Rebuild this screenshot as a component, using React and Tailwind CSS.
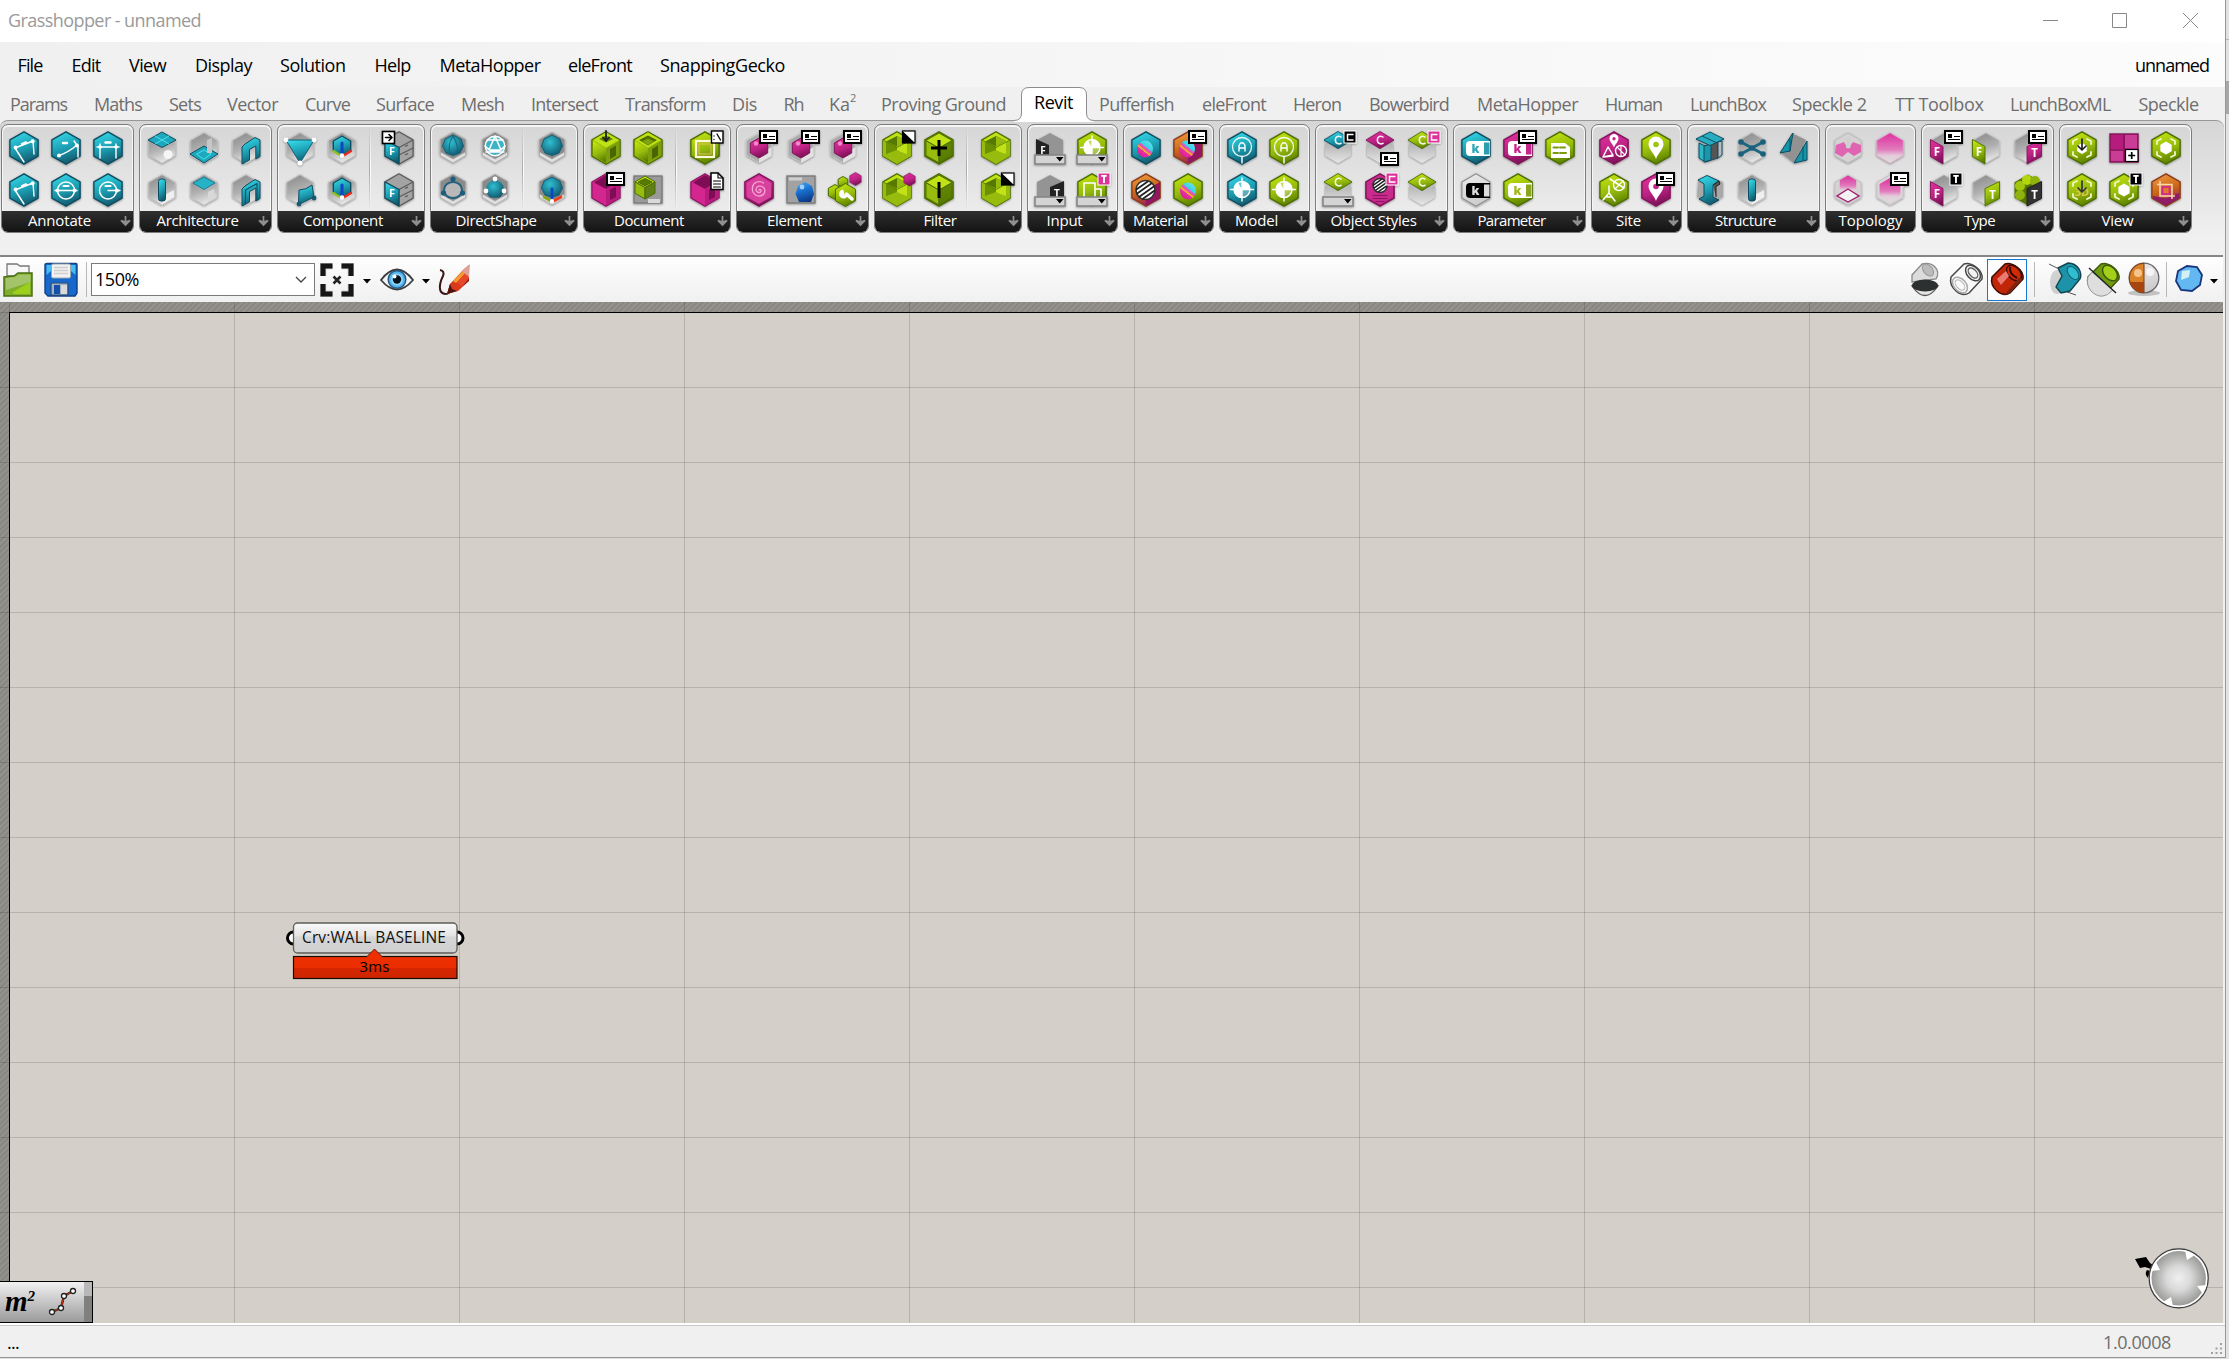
import React, { useLayoutEffect, useRef, useState } from "react";

/* ---------- text that is tracked to a given width ---------- */
function Fit({ text, w, className = "", children }) {
  const ref = useRef(null);
  const [ls, setLs] = useState(0);
  useLayoutEffect(() => {
    const natural = ref.current.getBoundingClientRect().width;
    setLs((w - natural) / text.length);
  }, [w, text]);
  return (
    <span className="inline-block shrink-0 whitespace-nowrap" style={{ width: w }}>
      <span ref={ref} className={"inline-block whitespace-nowrap " + className} style={{ letterSpacing: ls }}>
        {children || text}
      </span>
    </span>
  );
}

/* ---------- shared gradients ---------- */
const PAL = {
  teal: ["#34d6e6", "#1c9db1", "#115266", "#114c60"],
  green: ["#c0e213", "#97bc0b", "#567a00", "#4c6d00"],
  mag: ["#de2e9c", "#bf2485", "#730d51", "#80155a"],
  gray: ["#8e8e8e", "#b0b0b0", "#f0f0f0", "#a6a6a6"],
  orange: ["#ee983c", "#c96518", "#8e1b5f", "#8a3a1c"],
  light: ["#e9e9e9", "#dadada", "#c9c9c9", "#8f8f8f"],
  dark: ["#8c8c8c", "#666666", "#2c2c2c", "#777777"],
  blue: ["#3aa0f0", "#1668c4", "#0b3680", "#0d2f6a"],
};
function Defs() {
  return (
    <svg width="0" height="0" className="absolute">
      <defs>
        {Object.keys(PAL).map((k) => (
          <linearGradient key={k} id={"g-" + k} x1="0.35" y1="0" x2="0.65" y2="1">
            <stop offset="0" stopColor={PAL[k][0]} />
            <stop offset="0.5" stopColor={PAL[k][1]} />
            <stop offset="1" stopColor={PAL[k][2]} />
          </linearGradient>
        ))}
        <radialGradient id="g-ball" cx="0.4" cy="0.35" r="0.7">
          <stop offset="0" stopColor="#2fc0d2" />
          <stop offset="1" stopColor="#12566c" />
        </radialGradient>
        <linearGradient id="g-rain" x1="0.2" y1="0.9" x2="0.8" y2="0.1">
          <stop offset="0" stopColor="#d81ba0" />
          <stop offset="0.34" stopColor="#e8359a" />
          <stop offset="0.36" stopColor="#f5b13c" />
          <stop offset="0.46" stopColor="#f08a4a" />
          <stop offset="0.48" stopColor="#ee4aa8" />
          <stop offset="0.62" stopColor="#c66cc8" />
          <stop offset="0.64" stopColor="#35d3e6" />
          <stop offset="1" stopColor="#5fe0ea" />
        </linearGradient>
        <linearGradient id="g-fade" x1="0" y1="0" x2="0" y2="1">
          <stop offset="0" stopColor="#b2b2b2" />
          <stop offset="1" stopColor="#e6e6e6" />
        </linearGradient>
        <linearGradient id="g-pinkfade" x1="0" y1="0" x2="0" y2="1">
          <stop offset="0" stopColor="#e0309f" />
          <stop offset="0.55" stopColor="#e07bbd" />
          <stop offset="0.75" stopColor="#e3cbd9" />
          <stop offset="1" stopColor="#dedede" />
        </linearGradient>
        <radialGradient id="g-compass">
          <stop offset="0" stopColor="#f0f0f0" />
          <stop offset="0.45" stopColor="#d9d9d9" />
          <stop offset="1" stopColor="#9a9a98" />
        </radialGradient>
        <filter id="soft" x="-20%" y="-20%" width="140%" height="140%">
          <feDropShadow dx="0" dy="0.8" stdDeviation="1.1" floodOpacity="0.4" />
        </filter>
      </defs>
    </svg>
  );
}

/* ---------- icon primitives on a 42 × 42 cell ---------- */
const hexPts = (cx = 21, cy = 21, r = 16.2) => {
  const w = r * 0.87, h = r * 0.5;
  return `${cx},${cy - r} ${cx + w},${cy - h} ${cx + w},${cy + h} ${cx},${cy + r} ${cx - w},${cy + h} ${cx - w},${cy - h}`;
};
const Hex = ({ c, cx, cy, r, sw = 1.4 }) => (
  <polygon points={hexPts(cx, cy, r)} fill={`url(#g-${c})`} stroke={PAL[c][3]} strokeWidth={sw} strokeLinejoin="round" />
);
const GHex = () => <polygon points={hexPts(21, 21, 15.2)} fill="url(#g-gray)" stroke="#bdbdbd" strokeWidth="1" />;
const Cube = ({ c, cx = 21, cy = 21, r = 16.2, open }) => {
  const w = r * 0.87, h = r * 0.5, p = PAL[c];
  return (
    <g stroke={p[3]} strokeWidth="1" strokeLinejoin="round">
      <polygon points={`${cx - w},${cy - h} ${cx},${cy} ${cx},${cy + r} ${cx - w},${cy + h}`} fill={p[1]} />
      <polygon points={`${cx + w},${cy - h} ${cx},${cy} ${cx},${cy + r} ${cx + w},${cy + h}`} fill={p[2]} fillOpacity="0.85" />
      <polygon points={`${cx},${cy - r} ${cx + w},${cy - h} ${cx},${cy} ${cx - w},${cy - h}`} fill={p[0]} />
      {open && <polygon points={`${cx},${cy - r * 0.78} ${cx + w * 0.7},${cy - h * 0.95} ${cx},${cy - r * 0.14} ${cx - w * 0.7},${cy - h * 0.95}`} fill={p[2]} />}
    </g>
  );
};
/* cube with a doorway cut out of its right face */
const Block = ({ c, open }) => (
  <g>
    <polygon points={hexPts()} fill={PAL[c][1]} stroke={PAL[c][3]} strokeWidth="1.3" strokeLinejoin="round" />
    <polygon points="21,5.5 34,13 21,20.5 8,13" fill={PAL[c][0]} />
    <polygon points="8,14 21,21.5 21,36 8,28.5" fill="url(#g-green)" />
    <polygon points="34,14 21,21.5 21,36 34,28.5" fill="#7d9f08" />
    {open && <polygon points="21,8.5 30,13 21,18.5 12,13" fill="#4f7000" />}
    {open && <polygon points="21,11.5 27,14.5 21,18 15,14.5" fill="#7fa108" />}
    <polygon points="25,22 31,18.5 31,28.5 25,32" fill="#486600" />
  </g>
);
/* box seen from above with a hollow centre */
const Hollow = ({ c }) => {
  const p = PAL[c];
  return (
    <g>
      <polygon points={hexPts()} fill={p[0]} stroke={p[3]} strokeWidth="1.3" />
      <polygon points="7,13 21,20 21,37 7,29" fill={p[1]} />
      <polygon points="35,13 21,20 21,37 35,29" fill={p[1]} />
      <polygon points="10,14.5 21,9 31,14 21,19.5" fill={p[2]} />
      <polygon points="10,15 21,20 21,31 10,27" fill="#6d9000" />
      <polygon points="21,20 31,15 31,27 21,24" fill={p[0]} />
      <polygon points="10,27 21,23 30,27.500 21,33" fill={p[1]} />
      <polygon points="21,9 31,14 21,19.5" fill={p[1]} />
      <path d="M7 13L21 20.500 35 13" stroke="#4c6d00" strokeWidth="0.700" fill="none" />
    </g>
  );
};
const MagOpen = () => (
  <g strokeLinejoin="round">
    <polygon points={hexPts()} fill="#d4268f" stroke="#8a1760" strokeWidth="1.2" />
    <polygon points="21,6 33,12.5 21,20 9,13.5" fill="#7f0d54" />
    <polygon points="21,21 34,13.5 34,29 21,36" fill="#b51c7c" />
    <polygon points="25,21 31,18 31,28 25,31" fill="#7f0d54" />
  </g>
);
const L = ({ d, c = "#fff", w = 1.4, f = "none" }) => (
  <path d={d} stroke={c} strokeWidth={w} fill={f} strokeLinecap="round" strokeLinejoin="round" />
);
const Tx = ({ x, y, s = 11, c = "#fff", children, w = 700 }) => (
  <text x={x} y={y} fontSize={s} fill={c} fontWeight={w} textAnchor="middle" fontFamily="Open Sans, sans-serif">{children}</text>
);
const Dot = ({ x, y, r = 2, c = "#fff" }) => <circle cx={x} cy={y} r={r} fill={c} />;
const Card = ({ x = 22, y = 4 }) => (
  <g shapeRendering="crispEdges">
    <rect x={x} y={y} width="17" height="12" fill="#fff" stroke="#000" strokeWidth="1.6" />
    <path d={`M${x + 3} ${y + 4}h4M${x + 3} ${y + 5.5}h4`} stroke="#000" strokeWidth="2" />
    <path d={`M${x + 8.5} ${y + 5.5}h6M${x + 3} ${y + 8.8}h11.5`} stroke="#000" strokeWidth="1.2" />
  </g>
);
const Badge = ({ x = 27, y = 4, bg = "#000", fg = "#fff", bd = "#fff", ch }) => (
  <g>
    <rect x={x} y={y} width="12" height="12" fill={bg} stroke={bd} strokeWidth="1" />
    <Tx x={x + 6} y={y + 9.8} s={10} c={fg} w={800}>{ch}</Tx>
  </g>
);
/* open "C" bracket badge */
const CBadge = ({ x = 27, y = 4, bg = "#000" }) => (
  <g>
    <rect x={x} y={y} width="12" height="12" fill={bg} stroke="#fff" strokeWidth="1" />
    <path d={`M${x + 9.5} ${y + 3.5}h-6v5.5h6`} stroke="#fff" strokeWidth="1.5" fill="none" />
  </g>
);
const BW = () => (
  <g>
    <rect x="26.5" y="4" width="12.5" height="12" fill="#fff" stroke="#000" strokeWidth="1.2" />
    <path d="M26.5 4V16H39Z" fill="#000" />
  </g>
);
const Drop = () => (
  <g>
    <rect x="6" y="28" width="30" height="9" fill="#d4d4d4" stroke="#858585" strokeWidth="1.6" />
    <path d="M27 30h7.5l-3.7 4.5Z" fill="#000" />
  </g>
);
const Dim = () => (
  <g>
    <L d="M12 21L30 14M12 21L21 35M30 14L31 27" />
    <L d="M19 17l4-1.6" w={2.4} />
    <Dot x={12.6} y={20.6} /><Dot x={29.6} y={14.2} />
  </g>
);
const Door = () => <path d="M17 37V20L20 17 30 10.5 35 13V29.5L30.8 32V19L24.5 22.5V33Z" fill="url(#g-teal)" stroke="#114c60" strokeWidth="1" strokeLinejoin="round" />;
const Axis = () => (
  <g>
    <GHex />
    <Hex c="teal" cy={19} r={10} />
    <L d="M21 16V26" c="#0b45c8" w={3} />
    <L d="M12.5 24l6.5 4" c="#8fc21a" w={2.4} />
    <L d="M23.5 28l6.5-4" c="#ee2a1c" w={2.4} />
    <Dot x={21} y={28.5} r={2.2} />
  </g>
);
const Shell = ({ children }) => (
  <g>
    <polygon points={hexPts(21, 20, 14.8)} fill="#8a8a8a" stroke="#b2b2b2" strokeWidth="1" />
    <path d="M8.5 25L21 32 33.5 25V28.5L21 35.8 8.5 28.5Z" fill="#e0e0e0" stroke="#a5a5a5" strokeWidth="0.6" />
    {children}
  </g>
);
const Blob = () => <path d="M21 8L29 12 31.5 19 28 26 21 28.5 14 26 10.5 19 13 12Z" fill="url(#g-ball)" stroke="#155e76" strokeWidth="1" />;
const FCube = () => (
  <g strokeLinejoin="round">
    <polygon points={hexPts()} fill="#a3a3a3" stroke="#5c5c5c" strokeWidth="1.3" />
    <path d="M7 13L21 20.5 35 13M21 20.5V37M21 28L35 21M27 19.5l3-1.5M27 28l3-1.5" stroke="#5c5c5c" strokeWidth="1.3" fill="none" />
    <polygon points="7,13 21,20.5 21,37 7,29" fill="url(#g-teal)" stroke="#114c60" strokeWidth="1.2" />
    <Tx x={14} y={28} s={11}>F</Tx>
  </g>
);
const Elem = () => (
  <g>
    <polygon points={hexPts(21, 21, 14.5)} fill="#aaaaaa" stroke="#c2c2c2" />
    <path d="M21 36L33.5 29V20L21 28Z" fill="#e2e2e2" />
    <Hex c="mag" cx={21} cy={21} r={10} sw={1} />
    <Dot x={18} y={16.5} r={2.2} c="#f08cc8" />
  </g>
);
const Cross = () => (
  <g>
    <circle cx="21" cy="20.5" r="8" fill="none" stroke="#fff" strokeWidth="1.4" />
    <path d="M21 20.5V12.5A8 8 0 0 0 13 20.5ZM21 20.5V28.5A8 8 0 0 0 29 20.5Z" fill="#fff" fillOpacity="0.3" />
    <path d="M21 20.5V12.5A8 8 0 0 1 29 20.5ZM21 20.5V28.5A8 8 0 0 1 13 20.5Z" fill="#fff" />
    <path d="M21 20.5H13A8 8 0 0 1 17 13.600Z" fill="#fff" />
    <L d="M21 9V32M9.5 20.5H32.5" w={1.4} />
  </g>
);
const ACirc = () => (
  <g>
    <circle cx="21" cy="20" r="9.5" fill="none" stroke="#fff" strokeOpacity="0.9" strokeWidth="1.3" />
    <L d="M18 24V18.5L19.5 16H22.5L24 18.5V24M18 21H24M21 30V36" w={1.4} />
  </g>
);
const Rain = ({ x = 20, y = 22 }) => <ellipse cx={x} cy={y} rx="8" ry="8.5" fill="url(#g-rain)" />;
const CTop = ({ c, fade = true }) => (
  <g>
    {fade && <path d="M8 16L21 23 34 16V28.5L21 36 8 28.5Z" fill="url(#g-fade)" />}
    <polygon points="21,4.5 35,13 21,21.5 7,13" fill={`url(#g-${c})`} stroke={PAL[c][3]} strokeWidth="0.9" />
    <path d="M24.5 10.5C22 8 18.3 9.5 18.3 13S22 18 24.5 15.8" stroke="#fff" strokeOpacity="0.9" strokeWidth="1.6" fill="none" />
  </g>
);
const KTag = ({ fg, bg = "#fff", bar }) => (
  <g>
    <path d="M35 14H15Q11 14 11 18V25Q11 29 15 29H35Z" fill={bg} />
    <rect x="29" y="15.5" width="5.5" height="12" fill={bar} />
    <Tx x={20.5} y={26} s={12} c={fg} w={800}>k</Tx>
  </g>
);
const Pin = ({ x = 21, y = 17, s = 1, hole }) => (
  <g transform={`translate(${x} ${y}) scale(${s})`}>
    <path d="M0 14C-2 8-7.5 4.5-7.5-1A7.5 7.5 0 0 1 7.5-1C7.5 4.5 2 8 0 14Z" fill="#fff" />
    <circle cx="0" cy="-0.5" r="2.8" fill={hole} />
  </g>
);
const Face = ({ side, c, ch }) => (
  <g>
    <polygon points={hexPts(21, 21, 15)} fill="url(#g-gray)" stroke="#bebebe" strokeWidth="0.8" />
    {side === "l" ? (
      <g><polygon points="7.5,12.5 20,19.5 20,37 7.5,29.5" fill={`url(#g-${c})`} stroke={PAL[c][3]} strokeWidth="0.9" /><Tx x={13.8} y={29} s={11.5}>{ch}</Tx></g>
    ) : (
      <g><polygon points="34.5,12.5 20,19.5 20,37 34.5,29.5" fill={`url(#g-${c})`} stroke={PAL[c][3]} strokeWidth="0.9" /><Tx x={27.5} y={30} s={11.5}>{ch}</Tx></g>
    )}
  </g>
);
const Focus = ({ c = "#f4f4c8" }) => <L c={c} w={1.8} d="M12 17V14L16 12M26 12L30 14V17M30 25V28L26 30M16 30L12 28V25" />;
const Hatch = ({ x = 21, y = 21, r = 8.5, w = 1.8 }) => (
  <g>
    <circle cx={x} cy={y} r={r} fill="#fff" stroke="#333" strokeWidth="1.6" />
    <g transform={`rotate(-35 ${x} ${y})`}>
      {[-0.6, -0.2, 0.2, 0.6].map((k) => (
        <path key={k} d={`M${x - r * Math.sqrt(1 - k * k)} ${y + k * r}H${x + r * Math.sqrt(1 - k * k)}`} stroke="#222" strokeWidth={w} />
      ))}
    </g>
  </g>
);
const Steel = () => (
  <g stroke="#114c60" strokeWidth="1" strokeLinejoin="round">
    <path d="M10 16L16 19V35L10 31Z" fill="#2ab7c9" />
    <path d="M16 19L29 15V31L16 35Z" fill="#555" />
    <path d="M15 19L22 17V33L15 35Z" fill="#1c94a9" />
    <path d="M7 12L21 5 35 12 21 18.5Z" fill="#26aec0" />
    <path d="M13 9L27 15.5" fill="none" />
    <path d="M29 15V31L33 28V14Z" fill="#bbb" />
  </g>
);

const I = {
  dim: <><Hex c="teal" /><Dim /></>,
  dim2: <><Hex c="teal" /><L d="M13 29Q24 25 32 18M33 19V30M29 14L32 18" /><L d="M18 16h4" w={2.4} /><Dot x={14} y={28.5} /><Dot x={32} y={18.5} /></>,
  dim3: <><Hex c="teal" /><L d="M10 20H32M13 17V31M29 17V31" /><L d="M18.5 15.5h5" w={2.4} /><Dot x={13} y={20} r={1.8} /><Dot x={29} y={20} r={1.8} /></>,
  dia: <><Hex c="teal" /><circle cx="21" cy="21.5" r="8.5" fill="none" stroke="#fff" strokeWidth="1.5" /><L d="M10 21.5H32" /><L d="M18.5 17h5" w={2.2} /><Dot x={12.5} y={21.5} /><Dot x={29.5} y={21.5} /></>,
  rad: <><Hex c="teal" /><circle cx="21" cy="21.5" r="8.5" fill="none" stroke="#fff" strokeWidth="1.5" /><L d="M21 21.5H33" /><L d="M18.5 17h5" w={2.2} /><Dot x={30} y={21.5} /></>,
  ceil: <><GHex /><polygon points="21,5 35,13 21,20.5 7,13" fill="#1fa9bd" stroke="#114c60" /><L d="M14 9L28 17M28 9L14 17" c="#4be0ee" w={1} /><Dot x={27} y={27.5} r={4.5} c="#f6f6f6" /></>,
  floor: <><GHex /><polygon points="7,27 21,19 35,27 21,36" fill="#1fa9bd" stroke="#114c60" /><L d="M14 27L21 23 28 27 21 32Z" c="#4be0ee" w={1} /><path d="M24 13l5-2v15h-5Z" fill="#c6c6c6" /></>,
  door: <><GHex /><Door /></>,
  col: <><GHex /><polygon points="22,27 33,21 33,28 21,35.5" fill="#f0f0f0" /><rect x="17.5" y="10" width="7" height="22" rx="2.5" fill="url(#g-teal)" stroke="#114c60" /></>,
  roof: <><GHex /><polygon points="21,8 32,14 21,20.5 10,14" fill="#25b3c7" stroke="#178096" /><path d="M25 23l6-3v10l-6 3Z" fill="#d8d8d8" /></>,
  door2: <><GHex /><Door /><L d="M20.5 35V21L32 14.5V31" c="#0f5468" w={1.2} /></>,
  tri: <><GHex /><path d="M7 13H35L21 36Z" fill="url(#g-teal)" stroke="#155e76" /><Dot x={7} y={13} r={2.4} /><Dot x={35} y={13} r={2.4} /><Dot x={21} y={36} r={2.4} /></>,
  axis: <Axis />,
  panel: <><GHex /><path d="M20 21Q27 21 33 16L35 28 21 35 19.500 34Z" fill="url(#g-teal)" stroke="#114c60" /><Dot x={35} y={29} r={2.4} c="#145b70" /><Dot x={20} y={35} r={2.4} c="#145b70" /></>,
  fIn: <><FCube /><rect x="4.5" y="4.5" width="12" height="12" fill="#fff" stroke="#000" strokeWidth="1.6" /><L d="M7.5 10.5H13.5M11 7.5L14 10.5 11 13.5" c="#000" w={1.6} /></>,
  f: <FCube />,
  ds1: <Shell><Blob /><L d="M21 9Q15 18 18 27M21 9Q27 18 25 27" c="#126078" w={0.9} /></Shell>,
  ds2: <Shell><circle cx="21" cy="19" r="10" fill="#3cb4c6" /><L d="M21 9L27 23H15ZM11 19Q21 30 31 19M13 13H29M12 25H30" w={1.6} /><circle cx="21" cy="19" r="9.7" fill="none" stroke="#fff" strokeWidth="1.4" /></Shell>,
  ds3: <Shell><Blob /></Shell>,
  ds4: <Shell><ellipse cx="21" cy="21" rx="9" ry="8" fill="#b8b8b8" stroke="#22617e" strokeWidth="2" /><Dot x={21} y={10} r={2.6} c="#1c5b7c" /><Dot x={11.5} y={24} r={2.6} c="#1c5b7c" /><Dot x={30.5} y={24} r={2.6} c="#1c5b7c" /></Shell>,
  ds5: <Shell><path d="M21 9L30 22 26 28H16L12 22Z" fill="url(#g-ball)" stroke="#155e76" /><circle cx="21" cy="20" r="8.8" fill="url(#g-ball)" /><Dot x={21} y={10} r={2.4} /><Dot x={12} y={22} r={2.4} /><Dot x={30} y={22} r={2.4} /></Shell>,
  ds6: <Shell><Blob /><L d="M21 20V29" c="#0b45c8" w={2.8} /><L d="M13 28l6 3.5" c="#86a81a" w={2.8} /><L d="M23.5 31.5L30 28" c="#ee3a1c" w={2.8} /><Dot x={21} y={32} /></Shell>,
  doc1: <><Block c="green" /><polygon points="14,12 21,8.5 28,12 21,15.5" fill="#5f8500" /><L d="M21 4V14M18 10.5L21 14 24 10.5" c="#222" w={1.8} /></>,
  doc2: <Block c="green" open />,
  doc3: <><Hex c="green" /><rect x="12" y="14" width="18" height="16" fill="none" stroke="#fff8d8" strokeWidth="2.2" /><rect x="15" y="17" width="12" height="10" fill="none" stroke="#e6c060" strokeWidth="1" /><rect x="27.5" y="4" width="11.5" height="12" fill="#fff" stroke="#000" strokeWidth="1.4" /><L d="M30 9v0M30 12.500v0M33 7L36.500 13" c="#000" w={1.3} /></>,
  doc4: <><MagOpen /><Card x={22} /></>,
  doc5: <><rect x="7" y="7" width="28" height="27" fill="#9a9a9a" stroke="#777" strokeWidth="1.3" /><rect x="21" y="30" width="12" height="4" fill="#d9d9d9" /><Cube c="green" cx={18} cy={18.5} r={11.5} open /></>,
  doc6: <><MagOpen /><path d="M27 4h7l5 5v11.5h-12Z" fill="#fff" stroke="#000" strokeWidth="1.5" /><L d="M34 4v5h5M29.5 12h7M29.5 15h7M29.5 18h7" c="#000" w={1.1} /></>,
  el: <><Elem /><Card x={22} /></>,
  swirl: <><Hex c="mag" /><polygon points={hexPts(21, 21, 14)} fill="#d6429c" /><L d="M21 21c1.500-1.500 3 .5 1.500 2s-5 0-4.500-3 5-4 7.500-1.500 1.500 8-3.500 8.500-8.500-4-7.500-9 7-7 11-4" c="#f4a6d4" w={1.3} /></>,
  blue: <><rect x="7" y="7" width="28" height="27" fill="#a2a2a2" stroke="#777" strokeWidth="1.3" /><rect x="9" y="8.5" width="13" height="3" fill="#d0d0d0" /><path d="M25 13L32 17 34 25 31 33H19L15.5 25 18 17Z" fill="url(#g-blue)" /><Dot x={22} y={18} r={2.4} c="#9fd0ff" /></>,
  tool: <><Hex c="green" cx={13} cy={23} r={7.5} sw={1} /><Hex c="green" cx={21} cy={13} r={5.5} sw={1} /><Hex c="green" cx={23.5} cy={26} r={11.5} sw={1} /><L d="M24.500 25L30 30" w={3.500} /><path d="M21 20.500a4.500 4.500 0 1 0 5 5.500l-3.500-.5-.5-2.500Z" fill="#fff" /><Hex c="mag" cx={33.5} cy={10} r={6.5} sw={0.6} /></>,
  fi1: <><Hollow c="green" /><BW /></>,
  fi2: <><Hex c="green" /><Cube c="green" r={15} /><path d="M21 13V29M13 21H29" stroke="#000" strokeWidth="3" /></>,
  fi3: <Hollow c="green" />,
  fi4: <><Hollow c="green" /><Hex c="mag" cx={33.5} cy={10.5} r={6.5} sw={0.6} /></>,
  fi5: <><Hex c="green" /><Cube c="green" r={15} /><path d="M21 13V29" stroke="#000" strokeWidth="3" /></>,
  in1: <><path d="M21 6L34 13V29H8V13Z" fill="#949494" /><path d="M7 12L20 18V29H7Z" fill="#222" /><Tx x={14} y={27} s={10}>F</Tx><Drop /></>,
  in2: <><Hex c="green" /><Cross /><Drop /></>,
  in3: <><path d="M21 6L34 13V29H8V13Z" fill="#949494" /><path d="M35 12L21 18V29H35Z" fill="#222" /><Tx x={28} y={28} s={10}>T</Tx><Drop /></>,
  in4: <><Hex c="green" /><L d="M13 29V14H24V29M24 20H30V29" w={1.6} /><Badge bg="#dc3399" ch="T" /><Drop /></>,
  ma1: <><Hex c="teal" /><Rain /></>,
  ma2: <><Hex c="orange" /><polygon points="35,13 21,21 21,37 35,29" fill="#951361" /><Rain /><Card x={22} /></>,
  ma3: <><Hex c="orange" /><polygon points="35,13 21,21 21,37 35,29" fill="#951361" /><Hatch x={20.5} r={9.5} /></>,
  ma4: <><Hex c="green" /><Rain x={21} /></>,
  mo1: <><Hex c="teal" /><ACirc /></>,
  mo2: <><Hex c="green" /><ACirc /></>,
  mo3: <><Hex c="teal" /><Cross /></>,
  mo4: <><Hex c="green" /><Cross /></>,
  os1: <><CTop c="teal" /><CBadge /></>,
  os2: <><CTop c="mag" /><Card x={22} y={26} /></>,
  os3: <><CTop c="green" /><CBadge bg="#dc3399" /></>,
  os4: <><CTop c="green" /><Drop /></>,
  os5: <><Hex c="mag" /><polygon points={hexPts(21, 21, 15)} fill="#c92a8c" /><Hatch y={16.5} r={7} w={1.5} /><L d="M14 26.5H28M14 29.5H28M17 32.5H25" c="#8a1760" w={1.2} /><CBadge bg="#dc3399" /></>,
  os6: <CTop c="green" />,
  pa1: <><Hex c="teal" /><KTag fg="#2fa8bb" bar="#2b9fb2" /></>,
  pa2: <><Hex c="mag" /><KTag fg="#c9278b" bar="#c9278b" /><Card x={22} /></>,
  pa3: <><Hex c="green" /><path d="M12 16H26L31 20V31H12Z" fill="#fff" /><L d="M14.500 20.500H19M21 20.500H26M14.500 26H19M21 26H27" c="#7a9c10" w={2} /></>,
  pa4: <><Hex c="light" sw={1.2} /><KTag fg="#ddd" bg="#000" bar="#ddd" /></>,
  pa5: <><Hex c="green" /><KTag fg="#a4b81a" bar="#8aa51a" /></>,
  si1: <><Hex c="mag" /><Pin y={12} s={0.6} hole="#c8258b" /><L d="M10 30L15 20 20 28ZM10 30L20 29" w={1.4} /><circle cx="28" cy="24" r="5.5" fill="none" stroke="#fff" strokeWidth="1.4" /><L d="M24 20l8 8M28 18.5V29" w={1.1} /></>,
  si2: <><Hex c="green" /><Pin y={18} hole="#9fc40c" /></>,
  si3: <><Hex c="green" /><L d="M16 17V24L10 31M16 24L22 32M14 28H19M17 10L31 19" w={1.5} /><circle cx="26" cy="16" r="5.5" fill="none" stroke="#fff" strokeWidth="1.4" /><L d="M22 20L30 12" w={1.2} /></>,
  si4: <><Hex c="mag" /><Pin y={18} hole="#c8258b" /><Card x={22} /></>,
  st1: <Steel />,
  st2: <><GHex /><L d="M10 15L32 27M32 15L10 27" c="#1b6680" w={3} />{[[10, 15], [32, 15], [10, 27], [32, 27], [21, 21]].map(([a, b]) => <Dot key={a + "-" + b} x={a} y={b} r={2.8} c="#1b5f7c" />)}</>,
  st3: <><path d="M19 6L33 13 21 36 8 26Z" fill="#929292" /><path d="M20 6L7 26 17 24Z" fill="#1593a8" stroke="#114c60" /><path d="M34 14L21 36 34 33Z" fill="#1593a8" stroke="#114c60" /><L d="M17 12V24M30 20V33" c="#0f5468" w={1} /></>,
  st4: <><path d="M9 12L20 7 34 13V28L21 35 8 28Z" fill="#a8a8a8" /><path d="M9 11L18 6.500 30 12 24 16V28L30 31 21 36 10 30 15 27V15Z" fill="url(#g-teal)" stroke="#114c60" /><path d="M24 16L30 12 31 15 27 17.500V28" fill="#555" stroke="#222" /></>,
  to1: <><polygon points={hexPts(21, 21, 15)} fill="#d6d2d4" stroke="#bcbcbc" /><path d="M9 18L17 15 21 22 26 15 34 18V25L27 29 21 25 15 30 8 26Z" fill="#e052ac" fillOpacity="0.85" /><rect x="19" y="11" width="4.5" height="10" fill="#cfcfcf" /></>,
  to2: <polygon points={hexPts(21, 21, 15.2)} fill="url(#g-pinkfade)" stroke="#dba9c8" strokeWidth="0.8" />,
  to3: <><polygon points={hexPts(21, 21, 15)} fill="#d6d2d4" stroke="#c0c0c0" /><polygon points={hexPts(21, 16, 9.5)} fill="url(#g-pinkfade)" /><path d="M21 20L32 27 21 33 10 27Z" fill="#fff" fillOpacity="0.7" stroke="#a01c6c" strokeWidth="1.4" /></>,
  to4: <><polygon points={hexPts(21, 21, 15)} fill="#dcd6d9" stroke="#c4c4c4" /><polygon points={hexPts(21, 21, 12)} fill="url(#g-pinkfade)" /><Card x={22} /></>,
  ty1: <><Face side="l" c="mag" ch="F" /><Card x={22} /></>,
  ty2: <Face side="l" c="green" ch="F" />,
  ty3: <><Face side="r" c="mag" ch="T" /><Card x={22} /></>,
  ty4: <><Face side="l" c="mag" ch="F" /><Badge ch="T" /></>,
  ty5: <Face side="r" c="green" ch="T" />,
  ty6: <><polygon points={hexPts(21, 21, 15.500)} fill="#537500" /><Dot x={13} y={17} r={5} c="#a2c60e" /><Dot x={20} y={11} r={5} c="#b3d610" /><Dot x={28} y={12} r={5} c="#8fb20a" /><Dot x={13} y={26} r={5} c="#8fb20a" /><polygon points="34.5,12.5 20,19.5 20,37 34.5,29.5" fill="#333" stroke="#222" /><Tx x={27.5} y={30} s={11.5}>T</Tx></>,
  vi1: <><Hex c="green" /><Focus /><polygon points={hexPts(21, 21.5, 5.5)} fill="#fff" /><L d="M21 12V22M17 19L21 23 25 19" c="#222" w={1.7} /></>,
  vi2: <><rect x="7" y="7" width="28" height="28" fill="#b51f7e" stroke="#84175a" strokeWidth="1.4" /><path d="M8 22h13v12H8ZM22 8h12v13H22Z" fill="#d14a9f" fillOpacity="0.75" /><path d="M21 7V22M7 23H35M21 24V35" stroke="#7d1054" strokeWidth="1.5" /><rect x="22.5" y="22.5" width="12.5" height="12" fill="#fff" stroke="#000" strokeWidth="1.2" /><path d="M28.7 25V32M25.2 28.5H32.2" stroke="#000" strokeWidth="1.7" /></>,
  vi3: <><Hex c="green" /><Focus /><polygon points={hexPts(21, 21, 6.5)} fill="#fff" /></>,
  vi4: <><Hex c="green" /><Focus /><Tx x={21} y={27} s={11} c="#d9c84a">3D</Tx><L d="M21 12V22M17 19L21 23 25 19" c="#333" w={1.7} /></>,
  vi5: <><Hex c="green" /><Focus /><polygon points={hexPts(21, 21, 6.5)} fill="#fff" /><Badge ch="T" /></>,
  vi6: <><Hex c="orange" /><polygon points="8,27 21,29.500 34,24 34,29 21,36.500 8,29.500" fill="#8f1a66" /><path d="M15 12V27H30M12 15.5H27V30" stroke="#fbd9b4" strokeWidth="1.5" fill="none" /><rect x="17.5" y="18" width="7" height="7" fill="#e07a2a" stroke="#d32a8e" strokeWidth="1.8" /></>,
};
function Icon({ n }) {
  return (
    <svg viewBox="0 0 42 42" className="size-[42px] shrink-0 overflow-visible">
      {n && <g filter="url(#soft)">{I[n]}</g>}
    </svg>
  );
}

/* ---------- ribbon ---------- */
const GROUPS = [
  { t: "Annotate", w: 63, rows: [["dim", "dim2", "dim3"], ["dim", "dia", "rad"]] },
  { t: "Architecture", w: 82, rows: [["ceil", "floor", "door"], ["col", "roof", "door2"]] },
  { t: "Component", w: 80, rows: [["tri", "axis", "|", "fIn"], ["panel", "axis", "|", "f"]] },
  { t: "DirectShape", w: 81, rows: [["ds1", "ds2", "|", "ds3"], ["ds4", "ds5", "|", "ds6"]] },
  { t: "Document", w: 70, rows: [["doc1", "doc2", "|", "doc3"], ["doc4", "doc5", "|", "doc6"]] },
  { t: "Element", w: 55, rows: [["el", "el", "el"], ["swirl", "blue", "tool"]] },
  { t: "Filter", w: 33, rows: [["fi1", "fi2", "|", "fi3"], ["fi4", "fi5", "|", "fi1"]] },
  { t: "Input", w: 36, rows: [["in1", "in2"], ["in3", "in4"]] },
  { t: "Material", w: 55, rows: [["ma1", "ma2"], ["ma3", "ma4"]] },
  { t: "Model", w: 43, rows: [["mo1", "mo2"], ["mo3", "mo4"]] },
  { t: "Object Styles", w: 86, rows: [["os1", "os2", "os3"], ["os4", "os5", "os6"]] },
  { t: "Parameter", w: 68, rows: [["pa1", "pa2", "pa3"], ["pa4", "pa5", ""]] },
  { t: "Site", w: 25, rows: [["si1", "si2"], ["si3", "si4"]] },
  { t: "Structure", w: 61, rows: [["st1", "st2", "st3"], ["st4", "col", ""]] },
  { t: "Topology", w: 64, noArrow: true, rows: [["to1", "to2"], ["to3", "to4"]] },
  { t: "Type", w: 31, rows: [["ty1", "ty2", "ty3"], ["ty4", "ty5", "ty6"]] },
  { t: "View", w: 32, rows: [["vi1", "vi2", "vi3"], ["vi4", "vi5", "vi6"]] },
];
function Group({ g }) {
  return (
    <div className="flex h-[109px] shrink-0 flex-col overflow-hidden rounded-[7px] border border-[#7d7d7d] bg-gradient-to-b from-[#d6d6d6] to-[#f1f1f1] shadow-[inset_0_1px_0_1px_#f6f6f6]">
      <div className="flex h-[87px] pt-[2px] pr-[4.5px] pl-[0.5px]">
        {g.rows[0].map((n, i) =>
          n === "|" ? (
            <div key={i} className="flex h-[84px] w-[15px] justify-center">
              <div className="w-px bg-gradient-to-b from-transparent via-[#a9a9a9] to-transparent" />
              <div className="w-px bg-gradient-to-b from-transparent via-white to-transparent" />
            </div>
          ) : (
            <div key={i} className="flex flex-col">
              <Icon n={n} />
              <Icon n={g.rows[1][i]} />
            </div>
          )
        )}
      </div>
      <div className="flex h-[21px] items-center bg-gradient-to-b from-[#2f2f2f] to-[#141414]">
        <div className="flex h-[21px] flex-1 justify-center leading-[19px]">
          <Fit text={g.t} w={g.w} className="text-[15px] text-white" />
        </div>
        {!g.noArrow && (
          <svg viewBox="0 0 16 21" className="h-[21px] w-[16px] shrink-0">
            <path d="M8.500 5V14M4 9.500L8.500 14 13 9.500L8.500 11Z" stroke="#8f8f8f" strokeWidth="1.700" fill="#8f8f8f" />
          </svg>
        )}
      </div>
    </div>
  );
}

/* [label, start, end] */
const MENU = [
  ["File", 17.5, 42.5], ["Edit", 71.5, 100.5], ["View", 129, 166], ["Display", 195, 252], ["Solution", 280, 345.5],
  ["Help", 374.5, 410.5], ["MetaHopper", 439.5, 540.5], ["eleFront", 568, 632], ["SnappingGecko", 660, 785],
];
const TABS = [
  ["Params", 10, 67], ["Maths", 94, 142], ["Sets", 169, 201], ["Vector", 227, 278], ["Curve", 305, 350], ["Surface", 376, 434],
  ["Mesh", 461, 504], ["Intersect", 531, 598], ["Transform", 625, 705.5], ["Dis", 732, 757], ["Rh", 783.5, 803.5], ["Ka2", 829, 854.5],
  ["Proving Ground", 881, 1006], ["Revit", 1034, 1073], ["Pufferfish", 1099, 1174], ["eleFront", 1202, 1266], ["Heron", 1293, 1341],
  ["Bowerbird", 1369, 1449], ["MetaHopper", 1477, 1578], ["Human", 1605, 1662], ["LunchBox", 1690, 1766], ["Speckle 2", 1792, 1866.5],
  ["TT Toolbox", 1895, 1983.5], ["LunchBoxML", 2010, 2110.5], ["Speckle", 2138.5, 2198.5],
];
function Strip({ items, className, render }) {
  return items.map(([t, s, e], i) => (
    <div key={i} className={"relative shrink-0 " + className} style={{ marginLeft: s - (i ? items[i - 1][2] : 0), width: e - s }}>
      {render(t, e - s)}
    </div>
  ));
}

/* ---------- toolbar icons ---------- */
const OpenIcon = () => (
  <svg viewBox="0 0 30 36" className="h-[36px] w-[30px]">
    <path d="M4 14V2H14L17 4H26V14Z" fill="#f7f7f7" stroke="#777" strokeWidth="1.3" />
    <path d="M1 34V15L11 14 15 11H29V34Z" fill="#7fae2a" stroke="#4a7013" strokeWidth="1.5" />
    <path d="M2.5 16L12 15 16 12.5H27.5V20L3 28Z" fill="#a3c46a" />
    <path d="M10 30L27 20V32H10Z" fill="#9bcf1c" />
  </svg>
);
const SaveIcon = () => (
  <svg viewBox="0 0 34 36" className="h-[36px] w-[34px]">
    <path d="M1 3Q1 1.5 3 1.5H32Q33 1.5 33 3V31L31 34H4L1 31Z" fill="#1668cc" stroke="#123f86" strokeWidth="1.4" />
    <path d="M2.5 3H7V9L2.5 13ZM27 3H31.5V13L27 9Z" fill="#45bdf0" />
    <rect x="7.5" y="2" width="19" height="14" rx="1.5" fill="#f1f1f1" stroke="#9aa" />
    <path d="M10 5.5H24M10 8.5H24M10 11.5H24" stroke="#cfcfcf" strokeWidth="1.4" />
    <rect x="7" y="21" width="17" height="12" rx="1" fill="#9fb2c4" stroke="#2b4a70" strokeWidth="1.2" />
    <rect x="10" y="23" width="6" height="9" fill="#1650a8" />
    <rect x="17" y="23" width="6" height="9" fill="#d9d9d9" />
  </svg>
);
const FitIcon = () => (
  <svg viewBox="0 0 34 34" className="h-[34px] w-[34px]">
    <path d="M3 13V3H12.5M21.5 3H31V13M31 21V31H21.5M12.5 31H3V21" fill="none" stroke="#bdbdbd" strokeWidth="6.500" />
    <path d="M3 13V3H12.500M21.500 3H31V13M31 21V31H21.500M12.500 31H3V21" fill="none" stroke="#161616" strokeWidth="5" />
    <path d="M13.500 13.500L20.500 20.500M20.500 13.500L13.500 20.500" stroke="#222" strokeWidth="2.600" />
  </svg>
);
const Caret = () => (
  <svg viewBox="0 0 8 5" className="h-[5px] w-[8px]"><path d="M0 0H8L4 4.500Z" fill="#000" /></svg>
);
const EyeIcon = () => (
  <svg viewBox="0 0 34 24" className="h-[24px] w-[34px]">
    <path d="M1 12Q17-9 33 12Q17 31 1 12Z" fill="#f4f4f4" stroke="#3c3c3c" strokeWidth="1.8" />
    <circle cx="17" cy="11.5" r="8.8" fill="#55b4ec" stroke="#235a86" strokeWidth="1.5" />
    <circle cx="17" cy="11.5" r="6" fill="#8ed6fa" />
    <circle cx="17" cy="11.5" r="4.2" fill="#06121c" />
    <circle cx="14.5" cy="8.5" r="2" fill="#fff" />
  </svg>
);
const PenIcon = () => (
  <svg viewBox="0 0 34 34" className="h-[34px] w-[34px]">
    <path d="M2 7Q7 8 5 13C1 21 0 30 7 31Q11 31 14 27" fill="none" stroke="#3a1714" strokeWidth="2" />
    <path d="M12 21L26 6 31 2 31 17 20 28 9 31Z" fill="#e9472b" />
    <path d="M12 21L17 17 24 24 19 28 9 31Z" fill="#d93a1c" />
    <path d="M15 18L26 7 28 9 18 20Z" fill="#f0a030" />
    <path d="M24 8L32 1 31 14Z" fill="#dca39a" />
    <path d="M24 24L31 15V18L20 28Z" fill="#8e1c14" />
    <path d="M12 21L14 26 19 28 9 31Z" fill="#4a1511" />
  </svg>
);
const Cyl = ({ body, top, line }) => (
  <g stroke={line} strokeWidth="1.5" strokeLinejoin="round">
    <path d="M2 15L15 2Q20 0 27 5 34 10 33 17L20 31Q14 35 7 29 0 23 2 15Z" fill={body} />
    <ellipse cx="24" cy="11" rx="6" ry="9" transform="rotate(-42 24 11)" fill={top} />
  </g>
);
const V = ({ children }) => <svg viewBox="0 0 35 35" className="size-[35px] shrink-0 overflow-visible">{children}</svg>;
const GhostIcon = () => (
  <V>
    <path d="M4 13L14 2Q22 0 27 5 32 10 28 17L4 20Z" fill="#dcdcdc" stroke="#888" strokeWidth="1.3" />
    <ellipse cx="20" cy="8" rx="4.5" ry="7" transform="rotate(-40 20 8)" fill="#bbb" stroke="#999" />
    <path d="M4 24Q17 43 30 24Z" fill="#e4e4e4" stroke="#555" strokeWidth="1.3" />
    <ellipse cx="17" cy="23.5" rx="13" ry="6" fill="#2d3030" />
  </V>
);
const WireIcon = () => (
  <V>
    <Cyl body="#fafafa" top="#f2f2f2" line="#484848" />
    <ellipse cx="24" cy="11" rx="3.5" ry="6" transform="rotate(-42 24 11)" fill="none" stroke="#555" strokeWidth="1.3" />
    <ellipse cx="11" cy="23" rx="6" ry="9" transform="rotate(-42 11 23)" fill="none" stroke="#aaa" strokeWidth="1.5" />
    <ellipse cx="11" cy="23" rx="3.500" ry="6" transform="rotate(-42 11 23)" fill="none" stroke="#bbb" strokeWidth="1.200" />
  </V>
);
const ShadedIcon = () => (
  <V>
    <Cyl body="#c22608" top="#d02a06" line="#3c0c04" />
    <path d="M20 31L32 18Q31 14 28 17L14 33Z" fill="#7c2410" />
    <path d="M7 17L16 9 19 14 11 23Z" fill="#ea7a72" />
    <path d="M20 5Q19 12 27 16" stroke="#2c0602" strokeWidth="2" fill="none" />
  </V>
);
const SelIcon = () => (
  <V>
    <ellipse cx="9" cy="20" rx="7" ry="12" fill="#777" fillOpacity="0.3" />
    <path d="M10 6L20 1Q27 1 31 7 34 12 32 17L22 29 13 31 8 25 14 14Z" fill="#1c93a8" stroke="#11444f" strokeWidth="1.4" />
    <ellipse cx="25" cy="11" rx="4.5" ry="7.5" transform="rotate(-38 25 11)" fill="#2fbdd0" stroke="#125a68" />
    <path d="M1 2L11 7M19 30L28 33" stroke="#555" strokeWidth="1" />
  </V>
);
const CutIcon = () => (
  <V>
    <Cyl body="#6f9c10" top="#a4cf18" line="#3e5a0a" />
    <path d="M6 10L27 28Q21 34 17 34 11 35 5 29 0 23 2 15Z" fill="#dedede" stroke="#999" />
    <path d="M3 6L30 31" stroke="#222" strokeWidth="1.4" />
  </V>
);
const HalfIcon = () => (
  <V>
    <ellipse cx="17" cy="31" rx="16" ry="3" fill="#000" fillOpacity="0.2" />
    <circle cx="17" cy="16" r="14.8" fill="url(#g-light)" stroke="#666" strokeWidth="1.3" />
    <path d="M17 1.2A14.8 14.8 0 0 0 17 30.8Z" fill="#d9822a" stroke="#7a3a12" />
    <path d="M17 20L3 20A14.8 14.8 0 0 0 17 30.8Z" fill="#a84410" />
    <circle cx="11" cy="11" r="4" fill="#f6c489" />
    <circle cx="23" cy="10" r="4" fill="#fff" fillOpacity="0.700" />
  </V>
);
const OctIcon = () => (
  <V>
    <path d="M15 4L25 5 30 13 28 23 20 29 9 28 4 19 6 9Z" fill="#64b8f2" stroke="#17357e" strokeWidth="1.8" />
    <path d="M10 9L18 8 17 15 9 18Z" fill="#d3f1f4" />
  </V>
);
const Sep = () => <div className="h-[35px] w-px bg-[#b8b8b8]" />;

/* ---------- canvas ---------- */
function Canvas() {
  return (
    <div className="relative h-[1021px] w-[2223px] overflow-hidden bg-[#95928c]">
      <div className="absolute inset-0 bg-[repeating-linear-gradient(135deg,rgba(0,0,0,0.08)_0_2px,transparent_2px_4px)]" />
      <div className="absolute top-[10px] right-0 bottom-0 left-[9px] border-t border-l border-black bg-[#d4cfc8]" />
      <div className="absolute inset-0 bg-[linear-gradient(to_right,rgba(0,0,0,0.14)_1px,transparent_1px),linear-gradient(to_bottom,rgba(0,0,0,0.14)_1px,transparent_1px)] bg-[size:225px_100%,100%_75px] bg-[position:9px_0,0_10px]" />

      {/* parameter node */}
      <svg viewBox="0 0 180 62" className="absolute top-[618px] left-[284.5px] h-[62px] w-[180px]">
        <defs>
          <linearGradient id="cap" x1="0" y1="0" x2="0" y2="1">
            <stop offset="0" stopColor="#fafafa" /><stop offset="0.44" stopColor="#e2e2e2" />
            <stop offset="0.46" stopColor="#d6d6d6" /><stop offset="1" stopColor="#cfcfcf" />
          </linearGradient>
          <linearGradient id="red" x1="0" y1="0" x2="0" y2="1">
            <stop offset="0" stopColor="#ee3000" /><stop offset="0.5" stopColor="#ea2d00" />
            <stop offset="0.52" stopColor="#d62600" /><stop offset="1" stopColor="#cc2600" />
          </linearGradient>
        </defs>
        <circle cx="8.5" cy="18" r="6" fill="#fff" stroke="#000" strokeWidth="3" />
        <circle cx="172" cy="18" r="6" fill="#fff" stroke="#000" strokeWidth="3" />
        <rect x="8.5" y="3" width="163.5" height="30" rx="4" fill="url(#cap)" stroke="#5c5c58" strokeWidth="1.3" />
        <rect x="8.5" y="36.5" width="163.5" height="22" fill="url(#red)" stroke="#1a0a04" strokeWidth="1.2" />
        <path d="M82 36.5L89.5 29 97 36.5V38H82Z" fill="#ee3000" />
        <path d="M82 36.5L89.5 29 97 36.5" fill="none" stroke="#6b1c08" strokeWidth="1" />
      </svg>
      <div className="absolute top-[623px] left-[302px] h-[24px] leading-[24px]">
        <Fit text="Crv:WALL BASELINE" w={144} className="text-[15.5px] text-[#111]" />
      </div>
      <div className="absolute top-[652px] left-[359.5px] h-[24px] leading-[24px]">
        <Fit text="3ms" w={30} className="text-[15px] text-black" />
      </div>

      {/* unit widget */}
      <div className="absolute bottom-0 left-0 flex h-[42px] w-[93px] border border-l-0 border-black bg-gradient-to-b from-[#f2f2f2] to-[#9b9b9b]">
        <div className="w-[48px] pl-[5px] font-['Liberation_Serif'] text-[29px] leading-[38px] font-bold text-black italic">
          m<sup className="relative -top-[10px] text-[15px]">2</sup>
        </div>
        <svg viewBox="0 0 36 40" className="h-[40px] w-[36px]">
          <path d="M4 30L13 26 16 14 25 9" fill="none" stroke="#222" strokeWidth="2.4" />
          <path d="M4 30L13 26 16 14 25 9" fill="none" stroke="#b32a0c" strokeWidth="1.6" />
          {[[4, 30], [13, 26], [16, 14], [25, 9]].map(([x, y]) => <circle key={x} cx={x} cy={y} r="2.5" fill="#fff" stroke="#222" strokeWidth="1.3" />)}
        </svg>
        <div className="flex-1 bg-gradient-to-b from-[#b8b8b8] from-35% to-[#80807e] to-35%" />
      </div>

      {/* navigation compass */}
      <svg viewBox="0 0 80 64" className="absolute top-[944px] left-[2131px] h-[64px] w-[80px]">
        <path d="M4 13L15 11 19 17 22 19 20 23 14 21 9 22Z" fill="#000" />
        <path d="M16 24Q13 28 17 32L19 25Z" fill="#000" />
        <circle cx="47.7" cy="32.3" r="30.5" fill="#888" fillOpacity="0.3" />
        <circle cx="47.7" cy="32.3" r="29.5" fill="#fff" stroke="#3a3a3a" strokeWidth="1.2" />
        <circle cx="47.7" cy="32.3" r="27.2" fill="url(#g-compass)" />
        <path d="M54 4L64 9 56 14ZM76 39L72 48 66 40ZM42 60L32 56 40 51ZM20 25L25 16 29 24Z" fill="#fff" />
      </svg>
    </div>
  );
}

export default function App() {
  return (
    <div className="flex h-[1359px] w-[2229px] overflow-hidden bg-[#dedede] font-['Open_Sans',sans-serif]">
      <Defs />
      <div className="flex h-[1358px] w-[2226px] shrink-0 flex-col border-r border-b border-[#969696] bg-[#f0f0f0]">
        {/* title bar */}
        <div className="flex h-[42px] items-center bg-white pb-px pl-[8px]">
          <Fit text="Grasshopper - unnamed" w={193} className="text-[18px] text-[#9a9a9a]" />
          <svg viewBox="0 0 160 20" className="mr-[24px] ml-auto h-[20px] w-[160px]" fill="none" stroke="#888" strokeWidth="1">
            <path d="M2 9.5H17M71.5 2.5H85.5V16.5H71.5Z" />
            <path d="M142 2L157 17M157 2L142 17" />
          </svg>
        </div>
        {/* menu */}
        <div className="flex h-[45px] items-center bg-gradient-to-r from-[#f0f0f0] to-[#fcfcfc] pt-px text-[18px] text-black">
          <Strip items={MENU} className="" render={(t, w) => <Fit text={t} w={w} />} />
          <div className="mr-[16px] ml-auto"><Fit text="unnamed" w={74} /></div>
        </div>
        {/* tabs */}
        <div className="flex h-[33px] items-center text-[18px] text-[#6e6e6e]">
          <Strip
            items={TABS}
            className="flex h-[33px] items-center"
            render={(t, w) =>
              t === "Revit" ? (
                <>
                  <svg viewBox="0 0 80 35" className="absolute top-0 -left-[20px] z-10 h-[35px] w-[80px]">
                    <path d="M0 33.5Q7.5 33.5 7.5 26V8Q7.5 0.5 15 0.5H65Q72.5 0.5 72.5 8V26Q72.5 33.5 80 33.5V35H0Z" fill="#fff" />
                    <path d="M0 33.5Q7.5 33.5 7.5 26V8Q7.5 0.5 15 0.5H65Q72.5 0.5 72.5 8V26Q72.5 33.5 80 33.5" fill="none" stroke="#8c8c8c" />
                  </svg>
                  <span className="relative -top-px z-20 text-black"><Fit text={t} w={w} /></span>
                </>
              ) : t === "Ka2" ? (
                <span className="relative top-px">Ka<sup className="-top-[9px] text-[11px]">2</sup></span>
              ) : (
                <span className="relative top-px"><Fit text={t} w={w} /></span>
              )
            }
          />
        </div>
        {/* ribbon */}
        <div className="h-[135px]">
          <div className="flex h-[117px] w-[2224px] gap-[5px] rounded-t-[8px] border-t border-[#979797] bg-gradient-to-b from-[#d6d6d6] to-[#f0f0f0] pt-[3px] pl-[1px]">
            {GROUPS.map((g) => <Group key={g.t} g={g} />)}
          </div>
        </div>
        {/* toolbar */}
        <div className="flex h-[47px] w-[2223px] items-center border-t-2 border-[#858585] bg-gradient-to-b from-[#fefefe] to-[#f0f0f0] pl-[3px]">
          <OpenIcon />
          <div className="ml-[11px]"><SaveIcon /></div>
          <div className="ml-[8px]"><Sep /></div>
          <div className="ml-[4px] flex h-[33px] w-[224px] items-center border border-[#7a7a7a] bg-white pl-[3px]">
            <Fit text="150%" w={44} className="text-[18px] text-black" />
            <svg viewBox="0 0 12 8" className="mr-[7px] ml-auto h-[8px] w-[12px]"><path d="M1 1L6 6 11 1" fill="none" stroke="#444" strokeWidth="1.3" /></svg>
          </div>
          <div className="ml-[5px]"><FitIcon /></div>
          <div className="ml-[9px] pt-[3px]"><Caret /></div>
          <div className="ml-[9px]"><EyeIcon /></div>
          <div className="ml-[8px] pt-[3px]"><Caret /></div>
          <div className="ml-[8px]"><PenIcon /></div>
          <div className="ml-auto flex items-center">
            <GhostIcon />
            <div className="ml-[6px]"><WireIcon /></div>
            <div className="ml-[3px] flex h-[42px] w-[40px] items-center justify-center border border-[#1877cf] bg-[#fdfdfd]"><ShadedIcon /></div>
            <div className="ml-[7px]"><Sep /></div>
            <div className="ml-[13px]"><SelIcon /></div>
            <div className="ml-[3px]"><CutIcon /></div>
            <div className="ml-[6px]"><HalfIcon /></div>
            <div className="ml-[4px]"><Sep /></div>
            <div className="ml-[5px]"><OctIcon /></div>
            <div className="mr-[5px] ml-[3px] pt-[4px]"><Caret /></div>
          </div>
        </div>
        <Canvas />
        {/* status bar */}
        <div className="flex h-[34px] items-center border-t-2 border-white text-[18px] shadow-[inset_0_1px_0_#c9c9c9]">
          <div className="pt-px pl-[7px] leading-none text-black"><Fit text="..." w={12} /></div>
          <div className="ml-auto pt-[2px]"><Fit text="1.0.0008" w={68} className="text-[#6e6e6e]" /></div>
          <svg viewBox="0 0 12 12" className="mr-[2px] mb-[2px] ml-[40px] h-[12px] w-[12px] self-end" fill="#a0a0a0">
            <path d="M9 0h2v2H9ZM9 4.500h2v2H9ZM9 9h2v2H9ZM4.500 4.500h2v2h-2ZM4.500 9h2v2h-2ZM0 9h2v2H0Z" />
          </svg>
        </div>
      </div>
      {/* sliver of the window behind */}
      <div className="flex flex-1 flex-col bg-[#e2e2e2]">
        <div className="h-[40px] border-b border-[#b5b5b5]" />
        <div className="h-[41px]" />
        <div className="h-[33px] bg-[#a8a8a8]" />
      </div>
    </div>
  );
}
